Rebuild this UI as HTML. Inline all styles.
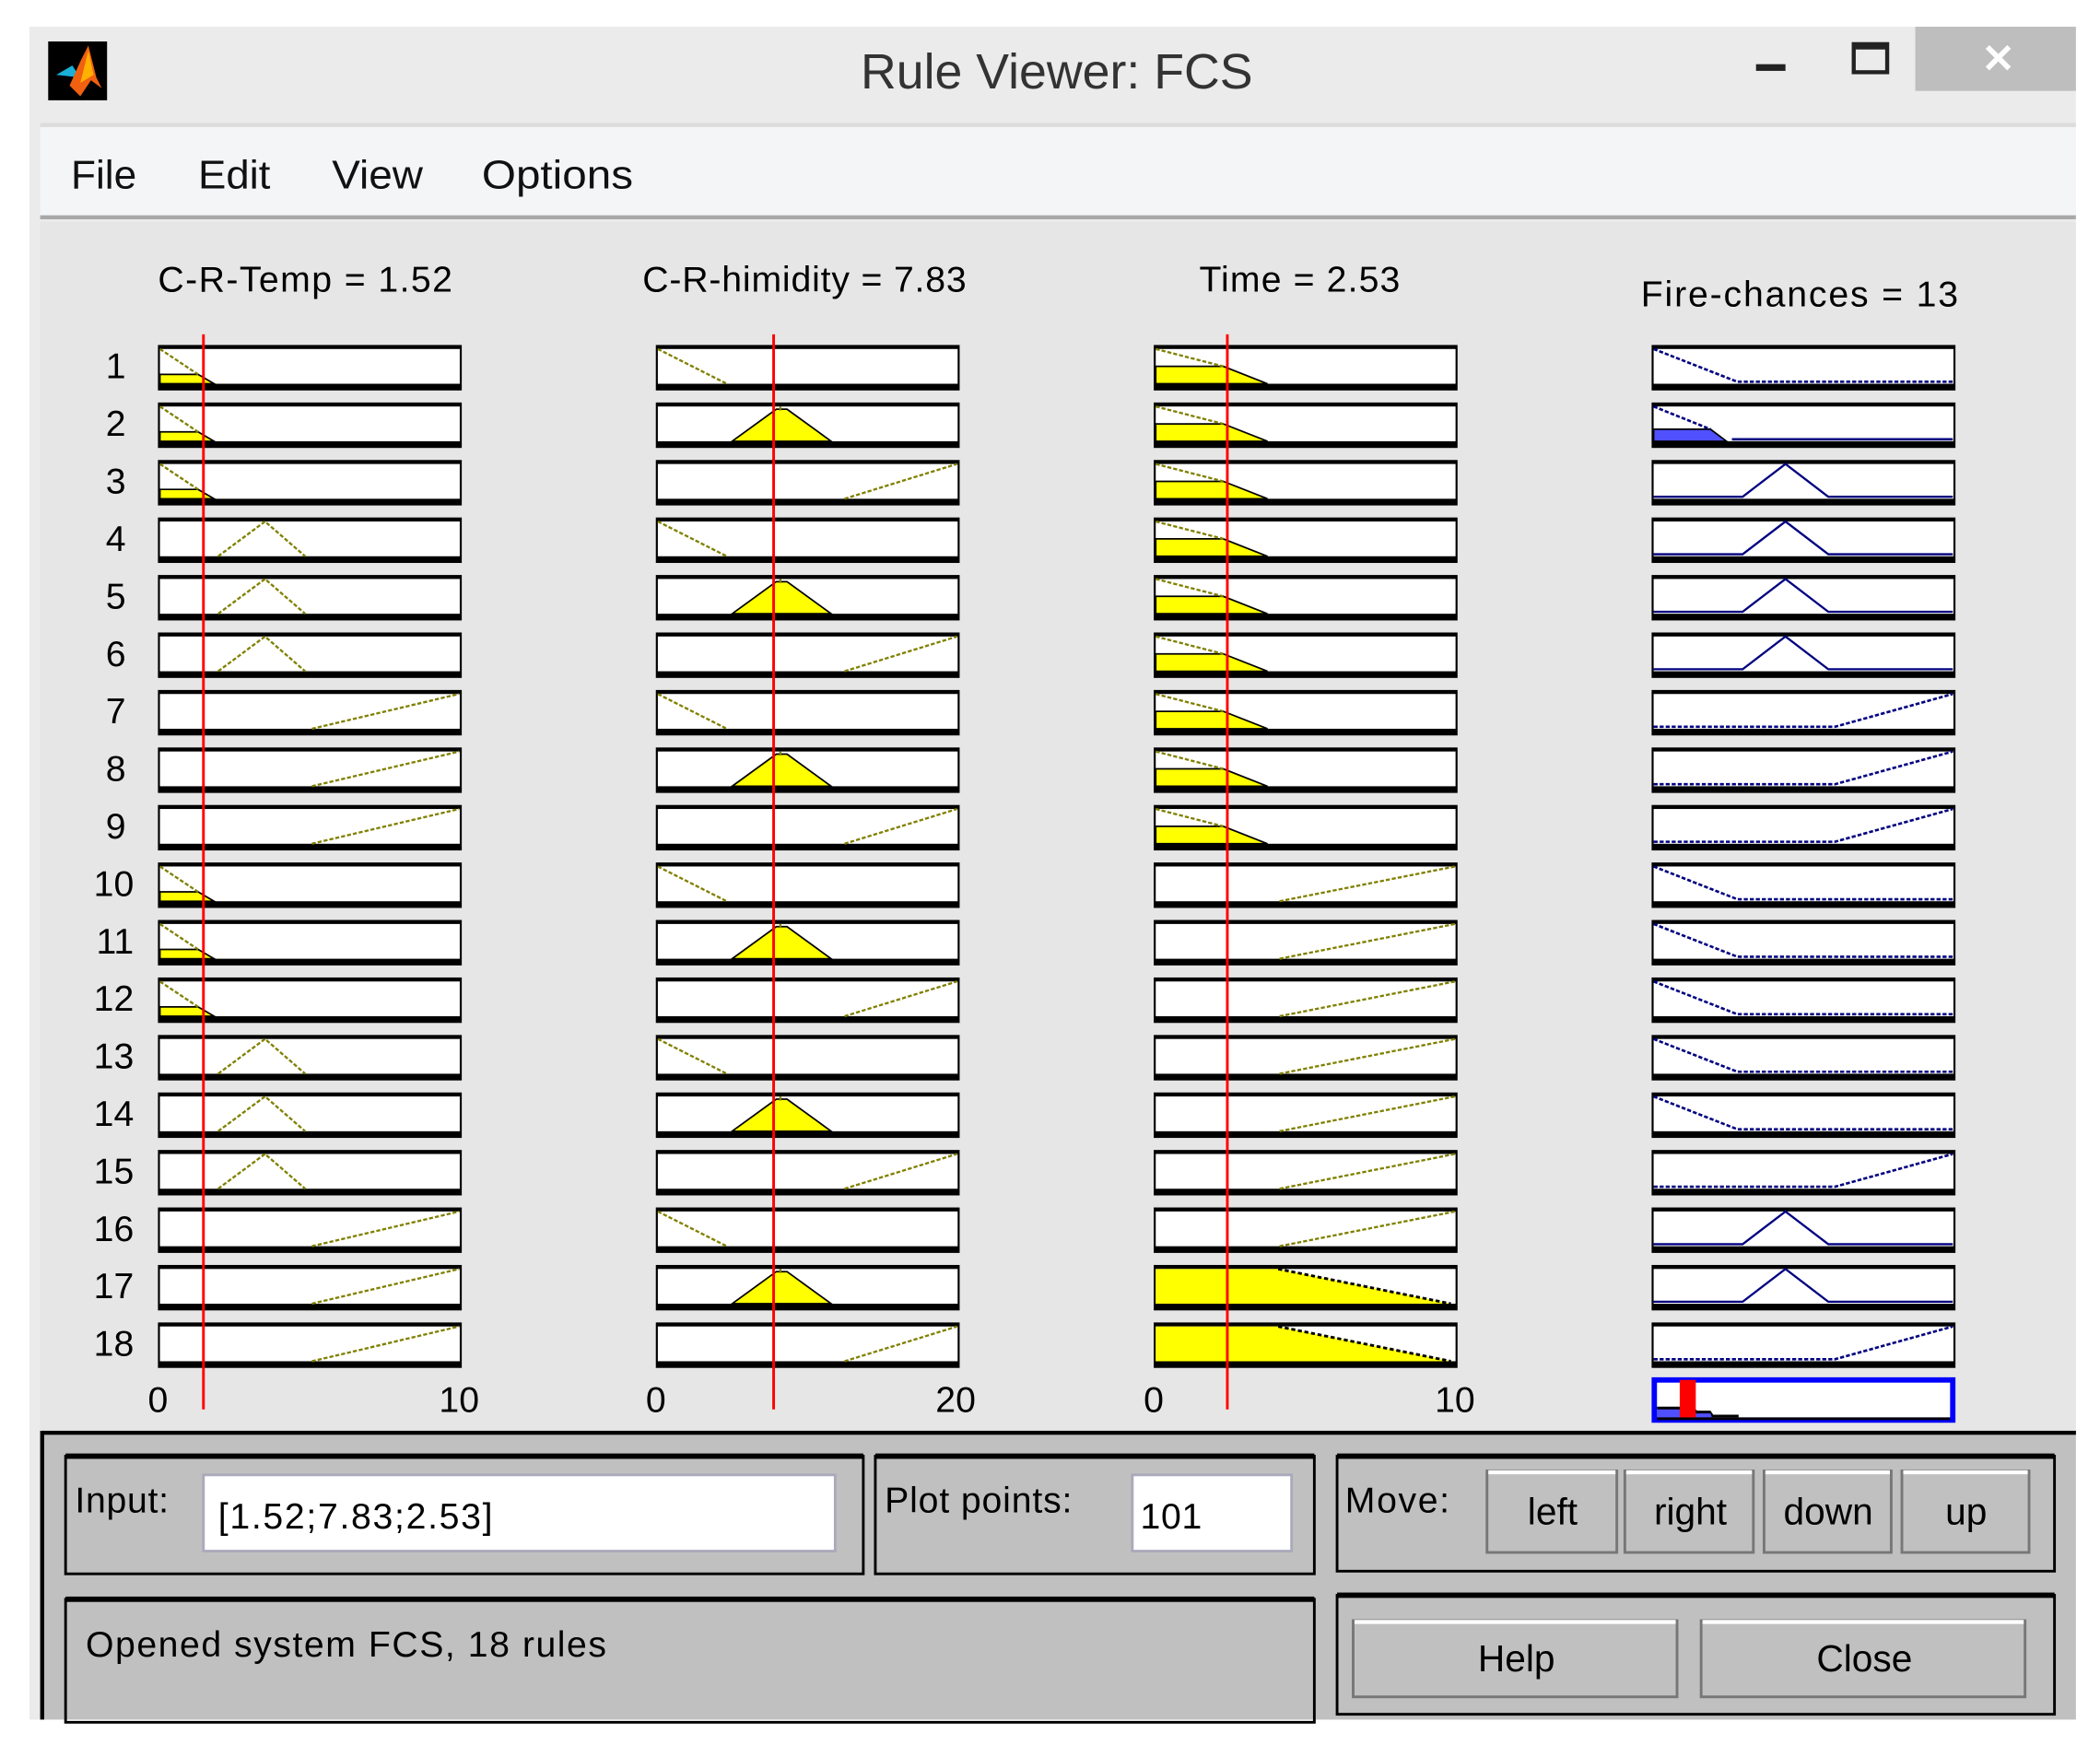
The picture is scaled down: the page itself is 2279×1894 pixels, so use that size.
<!DOCTYPE html>
<html><head><meta charset="utf-8"><style>
html,body{margin:0;padding:0;background:#fff;width:2279px;height:1894px;overflow:hidden}
svg{display:block}
text{font-family:"Liberation Sans",sans-serif;fill:#000}
</style></head><body>
<svg width="2279" height="1894" viewBox="0 0 1569 1305" preserveAspectRatio="none" xmlns="http://www.w3.org/2000/svg">
<defs>
<g id="box"><rect x="0" y="0" width="227" height="34" fill="#000"/><rect x="1.5" y="3" width="224" height="26" fill="#fff"/></g>
<g id="tLow"><use href="#box"/><polygon points="1.5,29 1.5,22 30,22 42,29" fill="#ff0" stroke="#000" stroke-width="1.2"/><line x1="1.5" y1="3" x2="30" y2="22" stroke="#808000" stroke-width="1.6" stroke-dasharray="3,1.5"/></g>
<g id="tMed"><use href="#box"/><polyline points="45,29 80,3 110,29" fill="none" stroke="#808000" stroke-width="1.6" stroke-dasharray="3,1.5"/></g>
<g id="tHigh"><use href="#box"/><line x1="115" y1="29" x2="225" y2="3" stroke="#808000" stroke-width="1.6" stroke-dasharray="3,1.5"/></g>
<g id="hLow"><use href="#box"/><line x1="1.5" y1="3" x2="53" y2="29" stroke="#808000" stroke-width="1.6" stroke-dasharray="3,1.5"/></g>
<g id="hMed"><use href="#box"/><polygon points="57,29 90,5 98,5 131,29" fill="#ff0" stroke="#000" stroke-width="1.2"/><line x1="93" y1="3" x2="93" y2="6" stroke="#808000" stroke-width="1.5"/></g>
<g id="hHigh"><use href="#box"/><line x1="141" y1="29" x2="225" y2="3" stroke="#808000" stroke-width="1.6" stroke-dasharray="3,1.5"/></g>
<g id="iLow"><use href="#box"/><polygon points="1.5,29 1.5,16 52,16 85,29" fill="#ff0" stroke="#000" stroke-width="1.2"/><line x1="1.5" y1="3" x2="52" y2="16" stroke="#808000" stroke-width="1.6" stroke-dasharray="3,1.5"/></g>
<g id="iHigh"><use href="#box"/><line x1="94" y1="29" x2="225" y2="3" stroke="#808000" stroke-width="1.6" stroke-dasharray="3,1.5"/></g>
<g id="iBig"><use href="#box"/><polygon points="1.5,29 1.5,3 93,3 222,29" fill="#ff0"/><line x1="93" y1="3" x2="222" y2="29" stroke="#000" stroke-width="2" stroke-dasharray="3,2"/></g>
<g id="fLow"><use href="#box"/><polyline points="1.5,3 64,27.5 225,27.5" fill="none" stroke="#000080" stroke-width="1.8" stroke-dasharray="3,1.5"/></g>
<g id="fLowF"><use href="#box"/><polygon points="1.5,29 1.5,20 44,20 56,29" fill="#5050ff" stroke="#000" stroke-width="1.2"/><line x1="1.5" y1="3" x2="44" y2="20" stroke="#000080" stroke-width="1.8" stroke-dasharray="3,1.5"/><line x1="60" y1="27.5" x2="225" y2="27.5" stroke="#000080" stroke-width="1.8"/></g>
<g id="fMed"><use href="#box"/><polyline points="1.5,27.5 68,27.5 100,3 132,27.5 225,27.5" fill="none" stroke="#000080" stroke-width="1.6"/></g>
<g id="fHigh"><use href="#box"/><polyline points="1.5,27.5 137,27.5 225,3" fill="none" stroke="#000080" stroke-width="1.8" stroke-dasharray="3,1.5"/></g>
</defs>
<!-- window -->
<rect x="22" y="20" width="1529" height="1266" fill="#ebebeb"/>
<rect x="1431" y="20" width="120" height="48" fill="#bebebe"/>
<text x="1493" y="54" font-size="30" text-anchor="middle" style="fill:#fff;font-weight:bold">✕</text>
<rect x="1312" y="48" width="22" height="5" fill="#222"/>
<rect x="1385" y="33" width="25" height="21" fill="none" stroke="#222" stroke-width="3"/><rect x="1385" y="33" width="25" height="4" fill="#222"/>
<!-- matlab icon -->
<rect x="36" y="31" width="44" height="44" fill="#000"/>
<polygon points="42,56 54,49 60,58" fill="#1ab0d8"/>
<polygon points="52,64 60,46 66,34 72,58 76,66 68,60 60,72" fill="#f06010"/>
<polygon points="60,62 66,38 70,56" fill="#ffb000"/>
<text x="643" y="66" font-size="37" textLength="293" lengthAdjust="spacingAndGlyphs" style="fill:#333">Rule Viewer: FCS</text>
<!-- menu -->
<rect x="30" y="94" width="1521" height="70" fill="#f4f5f7"/>
<rect x="30" y="92" width="1521" height="3" fill="#dcdcdc"/>
<rect x="30" y="161" width="1521" height="3" fill="#a8a8a8"/>
<g font-size="30"><text x="53" y="141" textLength="49" lengthAdjust="spacingAndGlyphs" style="fill:#111">File</text><text x="148" y="141" textLength="54" lengthAdjust="spacingAndGlyphs" style="fill:#111">Edit</text><text x="248" y="141" textLength="68" lengthAdjust="spacingAndGlyphs" style="fill:#111">View</text><text x="360" y="141" textLength="113" lengthAdjust="spacingAndGlyphs" style="fill:#111">Options</text></g>
<!-- main -->
<rect x="30" y="166" width="1521" height="904" fill="#e6e6e6"/>
<g font-size="27" lengthAdjust="spacingAndGlyphs"><text x="118" y="218" textLength="220">C-R-Temp = 1.52</text><text x="480" y="218" textLength="242">C-R-himidity = 7.83</text><text x="896" y="218" textLength="150">Time = 2.53</text><text x="1226" y="229" textLength="237">Fire-chances = 13</text></g>
<g font-size="27" text-anchor="end">
<text x="94" y="283">1</text><text x="94" y="326">2</text><text x="94" y="369">3</text><text x="94" y="412">4</text><text x="94" y="455">5</text><text x="94" y="498">6</text><text x="94" y="541">7</text><text x="94" y="584">8</text><text x="94" y="627">9</text><text x="100" y="670">10</text><text x="100" y="713">11</text><text x="100" y="756">12</text><text x="100" y="799">13</text><text x="100" y="842">14</text><text x="100" y="885">15</text><text x="100" y="928">16</text><text x="100" y="971">17</text><text x="100" y="1014">18</text>
</g>
<g transform="translate(118,0)">
<use href="#tLow" y="258"/><use href="#tLow" y="301"/><use href="#tLow" y="344"/><use href="#tMed" y="387"/><use href="#tMed" y="430"/><use href="#tMed" y="473"/><use href="#tHigh" y="516"/><use href="#tHigh" y="559"/><use href="#tHigh" y="602"/><use href="#tLow" y="645"/><use href="#tLow" y="688"/><use href="#tLow" y="731"/><use href="#tMed" y="774"/><use href="#tMed" y="817"/><use href="#tMed" y="860"/><use href="#tHigh" y="903"/><use href="#tHigh" y="946"/><use href="#tHigh" y="989"/>
</g>
<g transform="translate(490,0)">
<use href="#hLow" y="258"/><use href="#hMed" y="301"/><use href="#hHigh" y="344"/><use href="#hLow" y="387"/><use href="#hMed" y="430"/><use href="#hHigh" y="473"/><use href="#hLow" y="516"/><use href="#hMed" y="559"/><use href="#hHigh" y="602"/><use href="#hLow" y="645"/><use href="#hMed" y="688"/><use href="#hHigh" y="731"/><use href="#hLow" y="774"/><use href="#hMed" y="817"/><use href="#hHigh" y="860"/><use href="#hLow" y="903"/><use href="#hMed" y="946"/><use href="#hHigh" y="989"/>
</g>
<g transform="translate(862,0)">
<use href="#iLow" y="258"/><use href="#iLow" y="301"/><use href="#iLow" y="344"/><use href="#iLow" y="387"/><use href="#iLow" y="430"/><use href="#iLow" y="473"/><use href="#iLow" y="516"/><use href="#iLow" y="559"/><use href="#iLow" y="602"/><use href="#iHigh" y="645"/><use href="#iHigh" y="688"/><use href="#iHigh" y="731"/><use href="#iHigh" y="774"/><use href="#iHigh" y="817"/><use href="#iHigh" y="860"/><use href="#iHigh" y="903"/><use href="#iBig" y="946"/><use href="#iBig" y="989"/>
</g>
<g transform="translate(1234,0)">
<use href="#fLow" y="258"/><use href="#fLowF" y="301"/><use href="#fMed" y="344"/><use href="#fMed" y="387"/><use href="#fMed" y="430"/><use href="#fMed" y="473"/><use href="#fHigh" y="516"/><use href="#fHigh" y="559"/><use href="#fHigh" y="602"/><use href="#fLow" y="645"/><use href="#fLow" y="688"/><use href="#fLow" y="731"/><use href="#fLow" y="774"/><use href="#fLow" y="817"/><use href="#fHigh" y="860"/><use href="#fMed" y="903"/><use href="#fMed" y="946"/><use href="#fHigh" y="989"/>
</g>
<g stroke="#f00" stroke-width="2"><line x1="152" y1="250" x2="152" y2="1054"/><line x1="578" y1="250" x2="578" y2="1054"/><line x1="917" y1="250" x2="917" y2="1054"/></g>
<g font-size="27" text-anchor="middle"><text x="118" y="1056">0</text><text x="343" y="1056">10</text><text x="490" y="1056">0</text><text x="714" y="1056">20</text><text x="862" y="1056">0</text><text x="1087" y="1056">10</text></g>
<rect x="1234" y="1030" width="227" height="34" fill="#00f"/>
<rect x="1238" y="1034" width="219" height="26" fill="#fff"/>
<polygon points="1238,1060 1238,1052 1265,1052 1268,1055 1278,1055 1280,1058 1299,1058 1299,1060" fill="#000"/>
<polygon points="1238,1060 1238,1054 1264,1054 1266,1057 1278,1057 1279,1060" fill="#5050ff"/>
<rect x="1238" y="1060" width="219" height="2" fill="#000"/>
<rect x="1255" y="1032" width="12" height="28" fill="#f00"/>
<!-- bottom panel -->
<rect x="32" y="1070" width="1519" height="216" fill="#c0c0c0"/>
<rect x="32" y="1070" width="1519" height="3" fill="#000"/>
<rect x="30" y="1070" width="3" height="216" fill="#000"/>
<g fill="none" stroke="#000" stroke-width="2">
<rect x="49" y="1089" width="596" height="88"/><rect x="654" y="1089" width="328" height="88"/><rect x="999" y="1089" width="536" height="86"/><rect x="49" y="1196" width="933" height="92"/><rect x="999" y="1193" width="536" height="89"/>
</g>
<g fill="#000"><rect x="49" y="1087" width="596" height="4"/><rect x="654" y="1087" width="328" height="4"/><rect x="999" y="1087" width="536" height="4"/><rect x="49" y="1194" width="933" height="4"/><rect x="999" y="1191" width="536" height="4"/></g>
<rect x="152" y="1103" width="472" height="57" fill="#fff" stroke="#aab" stroke-width="2"/>
<rect x="846" y="1103" width="119" height="57" fill="#fff" stroke="#aab" stroke-width="2"/>
<g font-size="27" lengthAdjust="spacingAndGlyphs"><text x="56" y="1131" textLength="70">Input:</text><text x="163" y="1143" textLength="205">[1.52;7.83;2.53]</text><text x="661" y="1131" textLength="140">Plot points:</text><text x="852" y="1143" textLength="46">101</text><text x="1005" y="1131" textLength="78">Move:</text><text x="64" y="1239" textLength="389">Opened system FCS, 18 rules</text></g>
<g>
<rect x="1111" y="1100" width="97" height="61" fill="#c0c0c0" stroke="#777" stroke-width="2"/><line x1="1112" y1="1101" x2="1207" y2="1101" stroke="#fff" stroke-width="3"/>
<rect x="1214" y="1100" width="96" height="61" fill="#c0c0c0" stroke="#777" stroke-width="2"/><line x1="1215" y1="1101" x2="1309" y2="1101" stroke="#fff" stroke-width="3"/>
<rect x="1318" y="1100" width="95" height="61" fill="#c0c0c0" stroke="#777" stroke-width="2"/><line x1="1319" y1="1101" x2="1412" y2="1101" stroke="#fff" stroke-width="3"/>
<rect x="1421" y="1100" width="95" height="61" fill="#c0c0c0" stroke="#777" stroke-width="2"/><line x1="1422" y1="1101" x2="1515" y2="1101" stroke="#fff" stroke-width="3"/>
<rect x="1011" y="1212" width="242" height="57" fill="#c0c0c0" stroke="#777" stroke-width="2"/><line x1="1012" y1="1213" x2="1252" y2="1213" stroke="#fff" stroke-width="3"/>
<rect x="1271" y="1212" width="242" height="57" fill="#c0c0c0" stroke="#777" stroke-width="2"/><line x1="1272" y1="1213" x2="1512" y2="1213" stroke="#fff" stroke-width="3"/>
</g>
<g font-size="28" text-anchor="middle"><text x="1160" y="1140">left</text><text x="1263" y="1140">right</text><text x="1366" y="1140">down</text><text x="1469" y="1140">up</text><text x="1133" y="1250">Help</text><text x="1393" y="1250">Close</text></g>
</svg>
</body></html>
